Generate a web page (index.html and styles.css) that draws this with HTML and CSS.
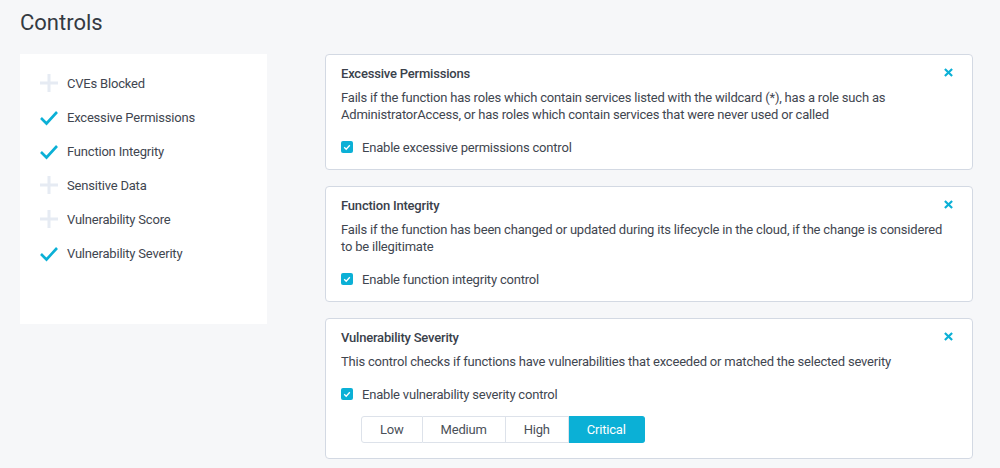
FILE: index.html
```html
<!DOCTYPE html>
<html>
<head>
<meta charset="utf-8">
<link rel="stylesheet" href="styles.css">
</head>
<body>
<h1 class="page-title">Controls</h1>
<div class="layout">
  <ul class="side">
    <li class="side-item"><svg class="ico" viewBox="0 0 18 18"><path d="M9 0V18M0 9H18" stroke="#e6ebf3" stroke-width="3"/></svg>CVEs Blocked</li>
    <li class="side-item"><svg class="ico" viewBox="0 0 18 18"><path d="M1 10L6.5 15.5L17 4" fill="none" stroke="#0bb0d6" stroke-width="2.6"/></svg>Excessive Permissions</li>
    <li class="side-item"><svg class="ico" viewBox="0 0 18 18"><path d="M1 10L6.5 15.5L17 4" fill="none" stroke="#0bb0d6" stroke-width="2.6"/></svg>Function Integrity</li>
    <li class="side-item"><svg class="ico" viewBox="0 0 18 18"><path d="M9 0V18M0 9H18" stroke="#e6ebf3" stroke-width="3"/></svg>Sensitive Data</li>
    <li class="side-item"><svg class="ico" viewBox="0 0 18 18"><path d="M9 0V18M0 9H18" stroke="#e6ebf3" stroke-width="3"/></svg>Vulnerability Score</li>
    <li class="side-item"><svg class="ico" viewBox="0 0 18 18"><path d="M1 10L6.5 15.5L17 4" fill="none" stroke="#0bb0d6" stroke-width="2.6"/></svg>Vulnerability Severity</li>
  </ul>
  <div class="cards">
    <div class="card">
      <div class="card-head"><div class="card-title">Excessive Permissions</div><svg class="close" viewBox="0 0 10 10"><path d="M1 1L9 9M9 1L1 9" stroke="#0bb0d6" stroke-width="2.4"/></svg></div>
      <p class="desc">Fails if the function has roles which contain services listed with the wildcard (*), has a role such as AdministratorAccess, or has roles which contain services that were never used or called</p>
      <label class="check"><span class="box"><svg viewBox="0 0 12 12"><path d="M3.2 6.2L5.2 8.2L8.8 4.2" fill="none" stroke="#fff" stroke-width="1.3"/></svg></span>Enable excessive permissions control</label>
    </div>
    <div class="card">
      <div class="card-head"><div class="card-title">Function Integrity</div><svg class="close" viewBox="0 0 10 10"><path d="M1 1L9 9M9 1L1 9" stroke="#0bb0d6" stroke-width="2.4"/></svg></div>
      <p class="desc">Fails if the function has been changed or updated during its lifecycle in the cloud, if the change is considered to be illegitimate</p>
      <label class="check"><span class="box"><svg viewBox="0 0 12 12"><path d="M3.2 6.2L5.2 8.2L8.8 4.2" fill="none" stroke="#fff" stroke-width="1.3"/></svg></span>Enable function integrity control</label>
    </div>
    <div class="card">
      <div class="card-head"><div class="card-title">Vulnerability Severity</div><svg class="close" viewBox="0 0 10 10"><path d="M1 1L9 9M9 1L1 9" stroke="#0bb0d6" stroke-width="2.4"/></svg></div>
      <p class="desc">This control checks if functions have vulnerabilities that exceeded or matched the selected severity</p>
      <label class="check"><span class="box"><svg viewBox="0 0 12 12"><path d="M3.2 6.2L5.2 8.2L8.8 4.2" fill="none" stroke="#fff" stroke-width="1.3"/></svg></span>Enable vulnerability severity control</label>
      <div class="seg">
        <button class="seg-btn">Low</button><button class="seg-btn">Medium</button><button class="seg-btn">High</button><button class="seg-btn active">Critical</button>
      </div>
    </div>
  </div>
</div>
</body>
</html>
```
FILE: styles.css
```css
* { box-sizing: border-box; }
html, body { margin: 0; padding: 0; }
body {
  background: #f6f7f9;
  font-family: Roboto, "Liberation Sans", sans-serif;
  color: #3a414b;
  width: 1000px;
  height: 468px;
  overflow: hidden;
  letter-spacing: -0.2px;
}
.page-title {
  margin: 0;
  padding: 9px 20px 0;
  font-size: 22px;
  font-weight: 400;
  line-height: 28px;
  color: #343a42;
  letter-spacing: 0;
}
.layout {
  display: flex;
  align-items: flex-start;
  gap: 58px;
  padding: 17px 20px 0;
}
.side {
  list-style: none;
  margin: 0;
  padding: 12px 0 0 20px;
  width: 247px;
  height: 270px;
  background: #fff;
  flex: none;
}
.side-item {
  display: flex;
  align-items: center;
  height: 34px;
  font-size: 13px;
  color: #3f4650;
}
.ico {
  width: 18px;
  height: 18px;
  margin-right: 9px;
  flex: none;
}
.cards {
  width: 648px;
  display: flex;
  flex-direction: column;
  gap: 16px;
}
.card {
  background: #fff;
  border: 1px solid #d3d9e3;
  border-radius: 4px;
  padding: 10px 15px 13px;
}
.card-head {
  display: flex;
  justify-content: space-between;
  align-items: center;
  height: 18px;
}
.card-title {
  font-size: 13px;
  font-weight: 500;
  color: #3a414b;
  line-height: 18px;
}
.close {
  width: 9px;
  height: 9px;
  margin: 0 4px 3px 0;
}
.desc {
  margin: 6px 0 0;
  font-size: 13px;
  line-height: 17px;
  color: #3f4650;
  padding-right: 10px;
}
.check {
  display: flex;
  align-items: center;
  height: 18px;
  margin-top: 15px;
  font-size: 13px;
  color: #3f4650;
}
.box {
  width: 12px;
  height: 12px;
  border-radius: 2px;
  background: #0bb0d6;
  margin-right: 9px;
  display: flex;
}
.box svg { width: 12px; height: 12px; }
.seg {
  display: flex;
  margin: 13px 0 2px 20px;
}
.seg-btn {
  height: 27px;
  padding: 0 18px;
  font-family: Roboto, "Liberation Sans", sans-serif;
  font-size: 13px;
  letter-spacing: -0.2px;
  color: #4a5059;
  background: #fff;
  border: 1px solid #dde2ea;
  border-left: none;
  cursor: pointer;
}
.seg-btn:first-child {
  border-left: 1px solid #dde2ea;
  border-radius: 3px 0 0 3px;
}
.seg-btn.active {
  background: #0bb0d6;
  border-color: #0bb0d6;
  color: #fff;
  border-radius: 0 3px 3px 0;
}
```
